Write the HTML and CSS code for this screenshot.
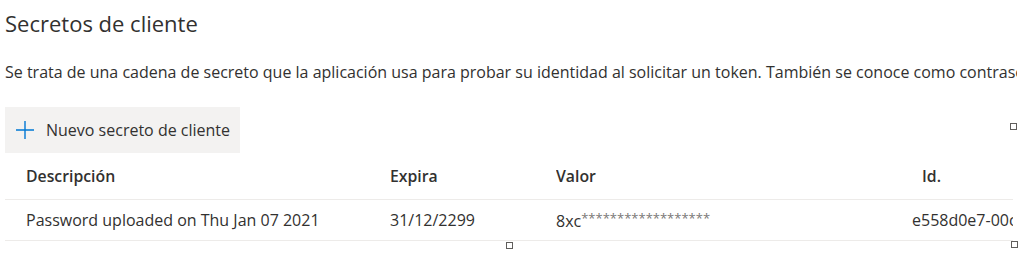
FILE: index.html
```html
<!DOCTYPE html>
<html lang="es">
<head>
<meta charset="utf-8">
<link rel="stylesheet" href="styles.css">
</head>
<body>
<div class="page">
  <h2 class="title">Secretos de cliente</h2>
  <p class="desc">Se trata de una cadena de secreto que la aplicación usa para probar su identidad al solicitar un token. También se conoce como contraseña de aplicación.</p>
  <div class="toolbar">
    <button class="btn">
      <svg class="plus" width="20" height="20" viewBox="0 0 20 20"><path d="M10 1v18M1 10h18" stroke="#0078d4" stroke-width="1.4" fill="none"/></svg>
      <span>Nuevo secreto de cliente</span>
    </button>
  </div>
  <div class="grid">
    <div class="row head">
      <div class="c c1">Descripción</div>
      <div class="c c2">Expira</div>
      <div class="c c3">Valor</div>
      <div class="c c4 hid">Id.</div>
    </div>
    <div class="row data">
      <div class="c c1">Password uploaded on Thu Jan 07 2021</div>
      <div class="c c2">31/12/2299</div>
      <div class="c c3">8xc<span class="stars">******************</span></div>
      <div class="c c4">e558d0e7-00c1-4b3a</div>
    </div>
  </div>
  <span class="handle h1"></span>
  <span class="handle h2"></span>
  <span class="handle h3"></span>
</div>
</body>
</html>
```
FILE: styles.css
```css
html, body {
  margin: 0;
  padding: 0;
  background: #ffffff;
}
body {
  font-family: "Open Sans", "Noto Sans", sans-serif;
  color: #323130;
  overflow: hidden;
  width: 1022px;
  height: 258px;
}
.page {
  position: relative;
  padding-left: 5px;
}
.title {
  margin: 0;
  padding-top: 9px;
  font-size: 22px;
  font-weight: 400;
  line-height: 28px;
  height: 28px;
  white-space: nowrap;
}
.desc {
  margin: 0;
  margin-top: 24px;
  font-size: 16px;
  line-height: 22px;
  white-space: nowrap;
  overflow: hidden;
  width: 1012px;
}
.toolbar {
  margin-top: 24px;
}
.btn {
  display: flex;
  align-items: center;
  gap: 11px;
  height: 46px;
  width: 235px;
  padding: 0 0 0 10px;
  border: 0;
  background: #f3f2f1;
  font-family: inherit;
  font-size: 16px;
  color: #323130;
  cursor: pointer;
  white-space: nowrap;
}
.plus {
  flex: none;
}
.grid {
  width: 1008px;
  overflow: hidden;
}
.row {
  display: flex;
  align-items: center;
  white-space: nowrap;
  font-size: 16px;
  box-sizing: border-box;
}
.head {
  height: 47px;
  font-size: 15.8px;
  font-weight: 600;
  border-bottom: 1px solid #edebe9;
  padding-bottom: 1px;
}
.data {
  height: 41px;
  border-bottom: 1px solid #edebe9;
}
.c {
  flex: none;
  overflow: hidden;
}
.c1 { width: 364px; padding-left: 21px; }
.c2 { width: 166px; }
.c3 { width: 356px; }
.c4 { width: 200px; }
.hid { padding-left: 10px; }
.stars {
  font-size: 13px;
  color: #797775;
  vertical-align: 4px;
}
.handle {
  position: absolute;
  width: 5px;
  height: 5px;
  border: 1px solid #605e5c;
  background: #fff;
}
.h1 { left: 1010px; top: 123px; }
.h2 { left: 506px; top: 242px; }
.h3 { left: 1011px; top: 241px; }
```
